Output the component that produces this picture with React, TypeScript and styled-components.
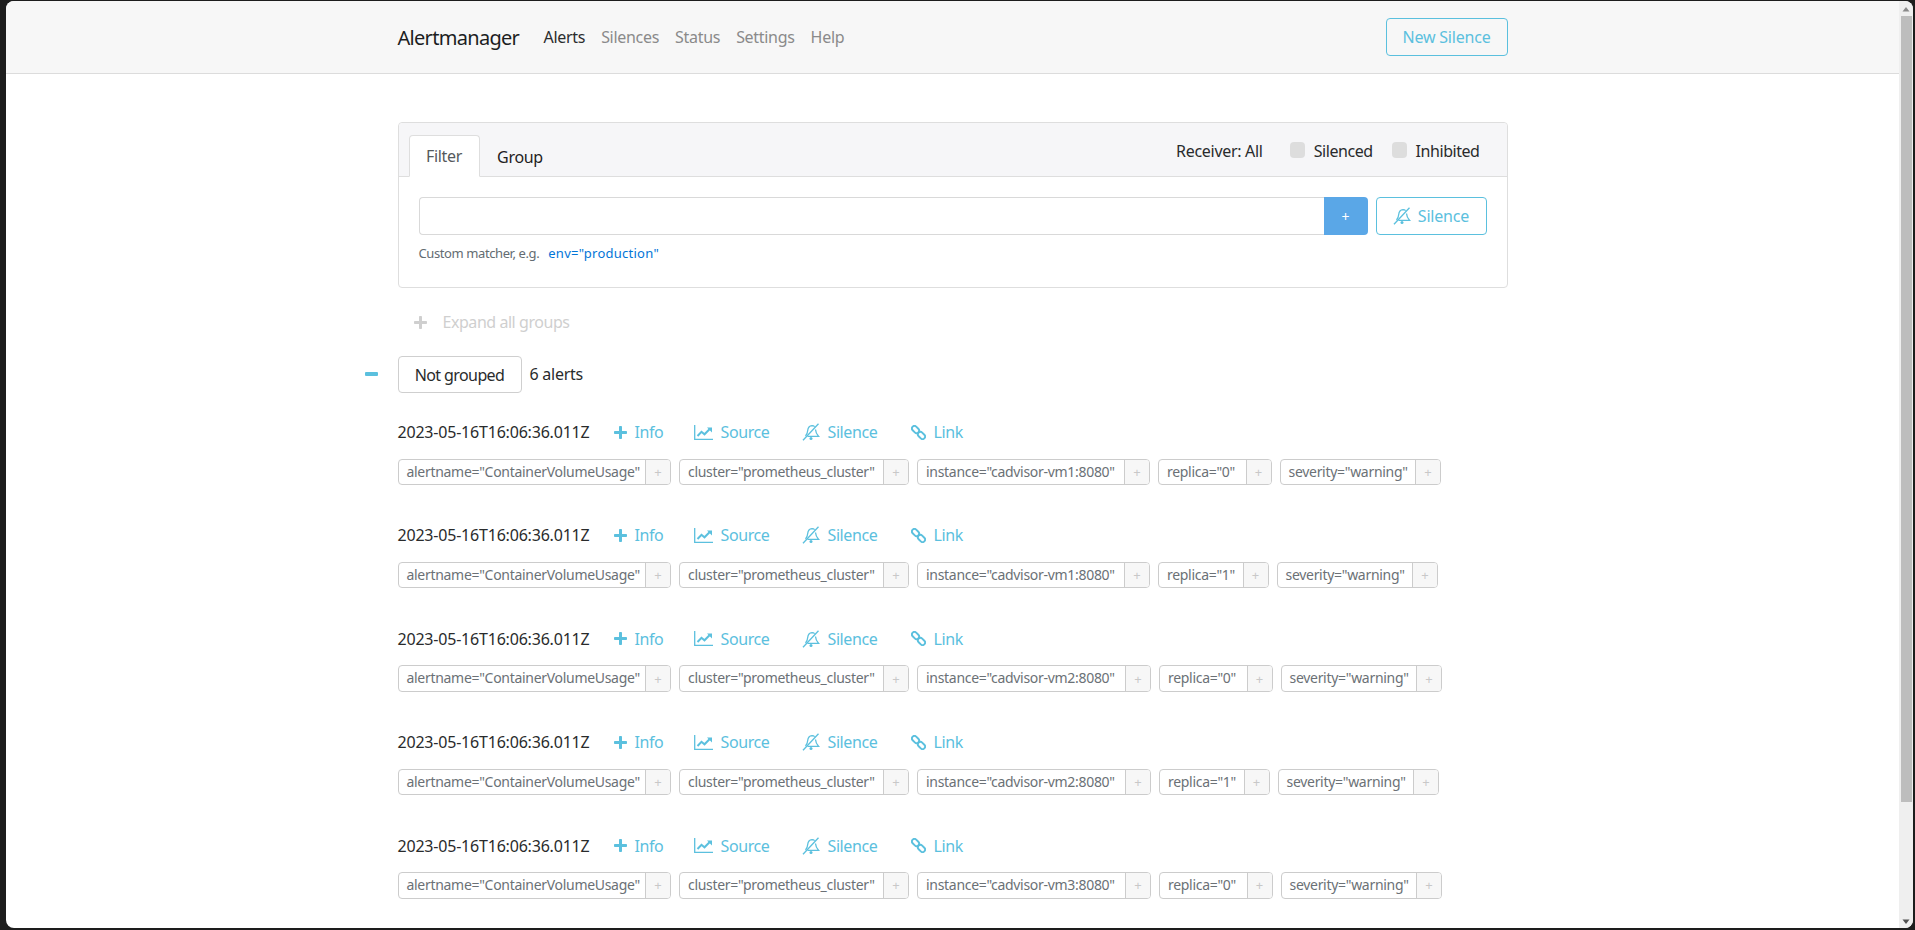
import React from "react";
import styled, { createGlobalStyle } from "styled-components";

const Global = createGlobalStyle`
  html, body { margin: 0; padding: 0; height: 100%; overflow: hidden; background: #1d1d1d; }
  body { font-family: "Noto Sans", "Open Sans", sans-serif; color: #292b2c; font-size: 16px; }
  * { box-sizing: border-box; }
`;

const Frame = styled.div`
  height: 930px;
  padding: 1px 2px 2px 6px;
  background: #1d1d1d;
`;
const Win = styled.div`
  height: 927px;
  border-radius: 8px;
  overflow: hidden;
  background: #fff;
  display: flex;
`;
const Page = styled.div`
  flex: 1;
  min-width: 0;
`;
const Rail = styled.div`
  width: 14px;
  flex: none;
  background: #efefef;
  display: flex;
  flex-direction: column;
  align-items: stretch;
`;
const RailArrow = styled.svg<{ $bottom?: boolean }>`
  display: block;
  width: 14px;
  height: 15px;
  flex: none;
  margin-top: ${(p) => (p.$bottom ? "auto" : "0")};
`;
const Thumb = styled.div`
  height: 786px;
  margin: 0 1px 0 2px;
  background: #bdbdbd;
`;

const Navbar = styled.header`
  height: 73px;
  background: #f7f7f7;
  border-bottom: 1px solid #dcdcdc;
`;
const Container = styled.div`
  width: 1110px;
  margin: 0 auto;
`;
const NavInner = styled(Container)`
  height: 72px;
  display: flex;
  align-items: center;
`;
const Brand = styled.span`
  font-size: 20px;
  letter-spacing: -0.7px;
  color: #1c1e1f;
  margin-right: 24px;
  width: 122px;
  white-space: nowrap;
`;
const NavList = styled.nav`
  display: flex;
  gap: 16px;
  flex: 1;
`;
const NavItem = styled.a<{ $active?: boolean }>`
  font-size: 16px;
  letter-spacing: -0.3px;
  color: ${(p) => (p.$active ? "#2a2c2d" : "#8a8a8a")};
`;
const OutlineButton = styled.button`
  height: 38px;
  background: #fff0;
  border: 1px solid #5bc0de;
  border-radius: 4px;
  color: #5bc0de;
  font: inherit;
  letter-spacing: -0.2px;
  display: inline-flex;
  align-items: center;
  justify-content: center;
  padding: 0;
`;
const NewSilence = styled(OutlineButton)`
  width: 122px;
`;

const Main = styled(Container)`
  padding-top: 48px;
`;
const Card = styled.section`
  height: 166px;
  border: 1px solid #dedede;
  border-radius: 4px;
`;
const CardHead = styled.div`
  height: 54px;
  background: #f6f6f8;
  border-bottom: 1px solid #dedede;
  border-radius: 4px 4px 0 0;
  display: flex;
  align-items: flex-end;
  padding: 0 27px 0 10px;
`;
const Tab = styled.div<{ $active?: boolean }>`
  height: ${(p) => (p.$active ? "42px" : "41px")};
  width: ${(p) => (p.$active ? "71px" : "81px")};
  margin-bottom: -1px;
  border: 1px solid ${(p) => (p.$active ? "#dedede" : "transparent")};
  border-bottom-color: ${(p) => (p.$active ? "#fff" : "transparent")};
  border-radius: 4px 4px 0 0;
  background: ${(p) => (p.$active ? "#fff" : "transparent")};
  color: ${(p) => (p.$active ? "#55595c" : "#1f2122")};
  display: flex;
  align-items: center;
  justify-content: center;
  letter-spacing: -0.3px;
`;
const Options = styled.div`
  margin-left: auto;
  align-self: stretch;
  padding-top: 16px;
  display: flex;
  align-items: flex-start;
  gap: 27px;
  letter-spacing: -0.45px;
  line-height: 24px;
  color: #292b2c;
`;
const Receiver = styled.span`
  letter-spacing: -0.3px;
`;
const Check = styled.label`
  display: flex;
  align-items: center;
  gap: 9px;
  margin-left: -8px;
  &:first-of-type { margin-left: 0; }
`;
const CheckBox = styled.span`
  width: 15px;
  height: 16px;
  margin-top: -2px;
  border-radius: 4px;
  background: #dddddd;
`;
const CardBody = styled.div`
  padding: 20px 20px 0;
`;
const InputRow = styled.div`
  display: flex;
  height: 38px;
`;
const FilterInput = styled.div`
  flex: 1;
  border: 1px solid #d9d9d9;
  border-right: 0;
  border-radius: 4px 0 0 4px;
`;
const AddButton = styled.div`
  width: 44px;
  background: #5aa7e7;
  border-radius: 0 4px 4px 0;
  color: #fff;
  font-size: 14px;
  display: flex;
  align-items: center;
  justify-content: center;
`;
const SilenceButton = styled(OutlineButton)`
  width: 111px;
  margin-left: 8px;
  gap: 7px;
`;
const Hint = styled.div`
  margin-top: 9px;
  font-size: 13px;
  letter-spacing: -0.4px;
  line-height: 18px;
  color: #636c72;
`;
const HintLink = styled.a`
  color: #0275d8;
  margin-left: 9px;
  letter-spacing: 0.25px;
`;
const ExpandAll = styled.div`
  height: 24px;
  margin-top: 22px;
  padding-left: 16px;
  display: flex;
  align-items: center;
  gap: 16px;
  color: #cfcfcf;
  letter-spacing: -0.45px;
  font-size: 16px;
`;
const GroupRow = styled.div`
  position: relative;
  margin-top: 22px;
  display: flex;
  align-items: center;
  height: 37px;
`;
const Collapse = styled.svg`
  position: absolute;
  left: -33px;
  top: 16px;
  width: 13px;
  height: 4px;
  color: #5bc0de;
`;
const GroupButton = styled.div`
  width: 124px;
  height: 37px;
  border: 1px solid #cfcfcf;
  border-radius: 4px;
  display: flex;
  align-items: center;
  justify-content: center;
  letter-spacing: -0.6px;
  color: #292b2c;
`;
const Count = styled.span`
  margin-left: 8px;
  letter-spacing: -0.25px;
  margin-top: -2px;
`;
const Alert = styled.article`
  padding-top: 27px;
  height: 103.4px;
`;
const AlertHead = styled.div`
  height: 24px;
  display: flex;
  align-items: center;
  line-height: 24px;
`;
const Stamp = styled.span`
  width: 216px;
  letter-spacing: -0.2px;
  color: #292b2c;
  white-space: nowrap;
`;
const Action = styled.a<{ $width: number; $gap: number }>`
  width: ${(p) => p.$width}px;
  display: flex;
  align-items: center;
  gap: ${(p) => p.$gap}px;
  color: #5bc0de;
  letter-spacing: -0.4px;
  svg { flex: none; }
`;
const Labels = styled.div`
  margin-top: 14.5px;
  display: flex;
  gap: 8px;
`;
const LabelChip = styled.div<{ $width: number }>`
  width: ${(p) => p.$width}px;
  height: 26.5px;
  border: 1px solid #cccccc;
  border-radius: 4px;
  display: flex;
  font-size: 14px;
  color: #6b7176;
`;
const LabelText = styled.span`
  flex: 1;
  padding-left: 8px;
  letter-spacing: -0.3px;
  line-height: 24.5px;
  white-space: nowrap;
`;
const LabelAdd = styled.span`
  width: 25px;
  flex: none;
  background: #f7f7f7;
  border-left: 1px solid #cccccc;
  border-radius: 0 3px 3px 0;
  color: #c8c8c8;
  font-size: 13px;
  display: flex;
  align-items: center;
  justify-content: center;
`;

const rows = [
  { vm: "vm1", replica: "0" },
  { vm: "vm1", replica: "1" },
  { vm: "vm2", replica: "0" },
  { vm: "vm2", replica: "1" },
  { vm: "vm3", replica: "0" },
];

const PlusIcon = () => (
  <svg width="13" height="13" viewBox="0 0 13 13" fill="currentColor">
    <path d="M5 .8c0-.4.4-.8.8-.8h1.400c.4 0 .8.4.8.8V5h4.200c.4 0 .8.4.8.8v1.400c0 .4-.4.8-.8.8H8v4.200c0 .4-.4.8-.8.8H5.800c-.4 0-.8-.4-.8-.8V8H.8C.4 8 0 7.600 0 7.200V5.800C0 5.400.4 5 .8 5H5z" />
  </svg>
);
const ChartIcon = () => (
  <svg width="19" height="15" viewBox="0 0 19 15" fill="none" stroke="currentColor">
    <path d="M.7 0v14.300H19" strokeWidth="1.300" />
    <path d="M3.500 11l4-4.200 3 2.500 5-5" strokeWidth="2" />
    <path d="M13 2.500h5V7.500z" fill="currentColor" stroke="none" />
  </svg>
);
const BellSlashIcon = () => (
  <svg width="18" height="18" viewBox="0 0 18 18" fill="none" stroke="currentColor" strokeWidth="1.300">
    <path d="M1 17.300L16.500 .7" />
    <path d="M3.500 13c1.500-1.500 2-3 2.200-5.500C6 4.500 7.500 2.800 10 2.600c1 0 2 .3 2.700 1" />
    <path d="M13.500 6.500c.2 2.500.8 4.500 3 6.800H5.500" />
    <circle cx="9" cy="15.600" r="1.500" fill="currentColor" stroke="none" />
  </svg>
);
const LinkIcon = () => (
  <svg width="15" height="15" viewBox="0 0 15 15" fill="none" stroke="currentColor" strokeWidth="1.900">
    <rect x="0.500" y="2" width="8" height="5" rx="2.500" transform="rotate(45 4.500 4.500)" />
    <rect x="6.500" y="8" width="8" height="5" rx="2.500" transform="rotate(45 10.500 10.500)" />
  </svg>
);

export default function App() {
  return (
    <>
      <Global />
      <Frame>
        <Win>
          <Page>
            <Navbar>
              <NavInner>
                <Brand>Alertmanager</Brand>
                <NavList>
                  <NavItem $active>Alerts</NavItem>
                  <NavItem>Silences</NavItem>
                  <NavItem>Status</NavItem>
                  <NavItem>Settings</NavItem>
                  <NavItem>Help</NavItem>
                </NavList>
                <NewSilence>New Silence</NewSilence>
              </NavInner>
            </Navbar>
            <Main>
              <Card>
                <CardHead>
                  <Tab $active>Filter</Tab>
                  <Tab>Group</Tab>
                  <Options>
                    <Receiver>Receiver: All</Receiver>
                    <Check><CheckBox />Silenced</Check>
                    <Check><CheckBox />Inhibited</Check>
                  </Options>
                </CardHead>
                <CardBody>
                  <InputRow>
                    <FilterInput />
                    <AddButton>+</AddButton>
                    <SilenceButton><BellSlashIcon />Silence</SilenceButton>
                  </InputRow>
                  <Hint>
                    Custom matcher, e.g.<HintLink>env="production"</HintLink>
                  </Hint>
                </CardBody>
              </Card>
              <ExpandAll><PlusIcon />Expand all groups</ExpandAll>
              <GroupRow>
                <Collapse viewBox="0 0 13 4"><rect width="13" height="4" rx="1" fill="currentColor" /></Collapse>
                <GroupButton>Not grouped</GroupButton>
                <Count>6 alerts</Count>
              </GroupRow>
              {rows.map((r, i) => (
                <Alert key={i}>
                  <AlertHead>
                    <Stamp>2023-05-16T16:06:36.011Z</Stamp>
                    <Action $width={80} $gap={8}><PlusIcon />Info</Action>
                    <Action $width={108} $gap={8}><ChartIcon />Source</Action>
                    <Action $width={109} $gap={8}><BellSlashIcon />Silence</Action>
                    <Action $width={60} $gap={8}><LinkIcon />Link</Action>
                  </AlertHead>
                  <Labels>
                    <LabelChip $width={273.5}><LabelText>alertname="ContainerVolumeUsage"</LabelText><LabelAdd>+</LabelAdd></LabelChip>
                    <LabelChip $width={230}><LabelText>cluster="prometheus_cluster"</LabelText><LabelAdd>+</LabelAdd></LabelChip>
                    <LabelChip $width={r.vm === "vm1" ? 233 : 234}><LabelText>instance="cadvisor-{r.vm}:8080"</LabelText><LabelAdd>+</LabelAdd></LabelChip>
                    <LabelChip $width={r.replica === "0" ? 113.5 : 110.5}><LabelText>replica="{r.replica}"</LabelText><LabelAdd>+</LabelAdd></LabelChip>
                    <LabelChip $width={161.5}><LabelText>severity="warning"</LabelText><LabelAdd>+</LabelAdd></LabelChip>
                  </Labels>
                </Alert>
              ))}
            </Main>
          </Page>
          <Rail>
            <RailArrow viewBox="0 0 14 15"><path d="M7 6l3.500 4.500h-7z" fill="#8a8a8a" /></RailArrow>
            <Thumb />
            <RailArrow $bottom viewBox="0 0 14 15"><path d="M7 11L3.500 6.500h7z" fill="#505050" /></RailArrow>
          </Rail>
        </Win>
      </Frame>
    </>
  );
}
